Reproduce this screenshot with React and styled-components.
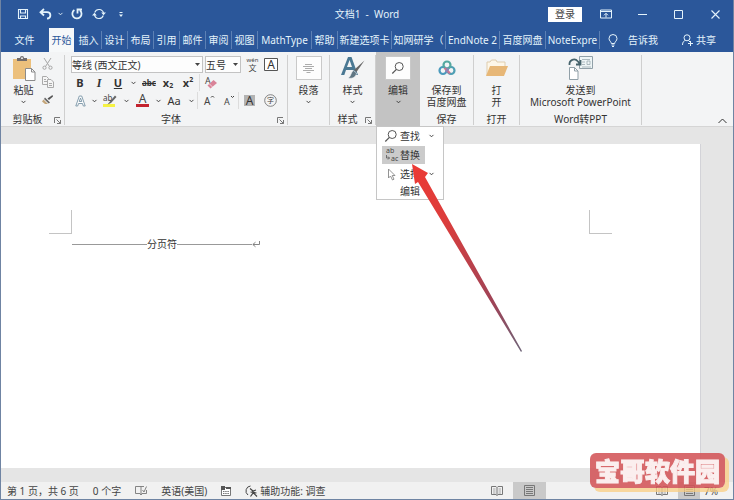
import React from 'react';
import styled, { createGlobalStyle, css } from 'styled-components';

const GlobalStyle = createGlobalStyle`
  * {
    box-sizing: border-box;
  }

  body {
    margin: 0;
    background: #e5e5e5;
    color: #333;
    font-family: 'Noto Sans', 'Noto Sans CJK SC', sans-serif;
    font-size: 10px;
    line-height: 12px;
  }

  button, select {
    margin: 0;
    padding: 0;
    border: none;
    background: transparent;
    color: inherit;
    font: inherit;
  }

  svg {
    display: block;
    flex: none;
    overflow: visible;
  }
`;

/* ---------- window ---------- */

const Window = styled.div`
  display: flex;
  flex-direction: column;
  min-height: 100vh;
  border: 1px solid #6f84a3;
  border-top: none;
  overflow: hidden;
`;

const Header = styled.header`
  margin: 0 -1px;
  background: #2b579a;
  color: #e4f3fb;
`;

const TitleBar = styled.div`
  display: grid;
  grid-template-columns: 1fr auto 1fr;
  align-items: center;
  height: 28px;
`;

const QuickAccess = styled.div`
  display: flex;
  align-items: center;
  padding-left: 14px;
`;

const ToolButton = styled.button`
  display: flex;
  flex: none;
  align-items: center;
  justify-content: center;
  width: ${({ w }) => w || 20}px;
  height: 16px;
`;

const Title = styled.h1`
  margin: 0;
  font-size: 10px;
  font-weight: 400;
  white-space: pre;
`;

const WindowButtons = styled.div`
  display: flex;
  align-items: center;
  justify-content: flex-end;
`;

const LoginButton = styled.button`
  width: 34px;
  height: 15px;
  margin-right: 6px;
  background: #fff;
  color: #444;
`;

const Tabs = styled.nav`
  display: flex;
  height: 24px;
  white-space: nowrap;
`;

const Tab = styled.button`
  flex: none;
  width: ${({ w }) => w || 26}px;
  overflow: hidden;
  border-right: 1px solid #5c80b4;
  border-image: linear-gradient(#2b579a 4px, #5c80b4 4px 20px, #2b579a 20px) 1;
  ${({ plain }) => plain && 'border: none;'}
  ${({ active }) =>
    active &&
    css`
      width: 25px;
      margin-right: 2px;
      border: none;
      background: #f6f8f9;
      color: #2b579a;
    `}
`;

const TellMe = styled.button`
  display: flex;
  align-items: center;
  gap: 10px;
  margin-left: 8px;
`;

const Share = styled.button`
  display: flex;
  align-items: center;
  gap: 3px;
  margin-left: auto;
  padding-right: 18px;
`;

/* ---------- ribbon ---------- */

const Ribbon = styled.section`
  display: flex;
  height: 75px;
  background: #f3f4f5;
  border-bottom: 1px solid #d5d5d5;
`;

const Group = styled.div`
  position: relative;
  display: flex;
  flex: none;
  flex-direction: column;
  width: ${({ w }) => w}px;
  padding-top: 4px;
  border-right: 1px solid #d0d0d0;
  border-image: linear-gradient(#f3f4f5 4px, #cfcfcf 4px 72px, #f3f4f5 72px) 1;
  ${({ open }) =>
    open &&
    css`
      border: none;
      background: #c3c3c3;
    `}
`;

const GroupBody = styled.div`
  display: flex;
  justify-content: center;
  height: 57px;
`;

const GroupLabel = styled.div`
  display: grid;
  grid-template-columns: 1fr auto;
  align-items: center;
  text-align: center;
  white-space: nowrap;

  svg {
    margin: 2px 3px 0 0;
  }
`;

const BigButton = styled.button`
  display: flex;
  flex-direction: column;
  align-items: center;
  justify-content: flex-start;
  white-space: nowrap;
`;

const IconBox = styled.span`
  display: flex;
  align-items: center;
  justify-content: center;
  width: 26px;
  height: 24px;
  margin-bottom: 4px;
  ${({ framed }) =>
    framed &&
    css`
      border: 1px solid #c9c9c9;
      background: #fdfdfd;
    `}
`;

const ChevronLine = styled.span`
  display: flex;
  align-items: center;
  height: 12px;
`;

const SideTools = styled.div`
  display: flex;
  flex-direction: column;
  gap: 2px;
  margin-left: 4px;
`;

const FontTools = styled.div`
  display: flex;
  flex-direction: column;
  gap: 1px;
  width: 100%;
  padding-left: 6px;
`;

const ToolRow = styled.div`
  display: flex;
  align-items: center;
  height: 17px;
`;

const Combo = styled.label`
  display: grid;
  width: ${({ w }) => w}px;
  height: 17px;
  margin-right: 2px;
  border: 1px solid #c3c3c3;
  background: #fdfdfd;

  select,
  svg {
    grid-area: 1 / 1;
  }

  select {
    width: 100%;
    height: 15px;
    appearance: none;
    outline: none;
  }

  svg {
    align-self: center;
    justify-self: end;
    margin-right: 2px;
    pointer-events: none;
  }
`;

const Letter = styled(ToolButton)`
  font-size: 11px;
  font-weight: ${({ bold }) => (bold ? 700 : 400)};
  text-decoration: ${({ line }) => line || 'none'};

  sub,
  sup {
    font-size: 7px;
    line-height: 8px;
  }

  sub {
    padding-top: 6px;
  }

  sup {
    padding-bottom: 6px;
  }
`;

const ItalicLetter = styled(Letter)`
  font-family: 'Liberation Serif', serif;
  font-size: 12px;
  font-style: italic;
`;

const StrikeLetter = styled(Letter)`
  font-size: 8px;
  text-decoration: line-through;
`;

const Separator = styled.span`
  width: 1px;
  height: 17px;
  background: #dcdcdc;
`;

const CollapseButton = styled.button`
  align-self: flex-end;
  margin-left: auto;
  padding: 0 6px 2px 0;
`;

/* ---------- menu below the edit group ---------- */

const Menu = styled.div`
  position: absolute;
  z-index: 2;
  top: 74px;
  left: 0;
  width: 68px;
  height: 74px;
  border: 1px solid #c6c6c6;
  background: #fff;
`;

const MenuItem = styled.button`
  display: grid;
  grid-template-columns: 18px 20px 1fr;
  align-items: center;
  width: ${({ selected }) => (selected ? 43 : 60)}px;
  height: 18px;
  margin: 0 0 1px 5px;
  text-align: left;
  background: ${({ selected }) => (selected ? '#cbcbcb' : 'transparent')};

  svg {
    justify-self: center;
  }
`;

const MenuCaption = styled.div`
  padding-left: 23px;
  line-height: 15px;
`;

const Pointer = styled.svg`
  position: absolute;
  top: 36px;
  left: 34px;
  pointer-events: none;
`;

/* ---------- document ---------- */

const Page = styled.main`
  flex: 1;
  margin: 17px 32px 14px 0;
  padding-top: 66px;
  border-right: 1px solid #d3d3d8;
  background: #fff;
`;

const MarginMarks = styled.div`
  display: flex;
  justify-content: space-between;
  padding: 0 88px 0 48px;
`;

const Mark = styled.span`
  width: 23px;
  height: 24px;
  border-bottom: 1px solid #c4c4c4;
  ${({ side }) => `border-${side}: 1px solid #c4c4c4;`}
`;

const PageBreak = styled.p`
  display: flex;
  align-items: center;
  width: 188px;
  margin: 4px 0 0 71px;
`;

const Rule = styled.span`
  flex: 1;
  height: 1px;
  background: #999;
`;

/* ---------- status bar ---------- */

const StatusBar = styled.footer`
  display: flex;
  align-items: center;
  height: 17px;
  padding-left: 6px;
  background: #f1f1f1;
  color: #444;
  white-space: nowrap;
`;

const StatusItem = styled.span`
  display: flex;
  align-items: center;
  gap: 2px;
  margin-right: 14px;
`;

const ViewButtons = styled.div`
  display: flex;
  align-items: center;
  gap: ${({ spaced }) => (spaced ? 99 : 0)}px;
  height: 100%;
  ${({ spaced }) => spaced && 'margin-left: auto;'}
`;

const ViewButton = styled.button`
  display: flex;
  align-items: center;
  justify-content: center;
  width: ${({ w }) => w || 33}px;
  height: 100%;
  background: ${({ on }) => (on ? '#c9c9c9' : 'transparent')};
`;

const Zoom = styled.span`
  width: 33px;
  padding-left: 4px;
`;

const Stamp = styled.div`
  position: fixed;
  z-index: 3;
  right: 9px;
  bottom: 12px;
  padding: 0 5px;
  border-radius: 6px;
  background: rgba(211, 84, 88, 0.88);
  box-shadow: 4px 4px 0 rgba(250, 205, 130, 0.75);
  color: #fbeeee;
  font-family: 'Noto Sans CJK SC', sans-serif;
  font-size: 25px;
  font-weight: 900;
  line-height: 35px;
  -webkit-text-stroke: 1px #fbeeee;
`;

/* ---------- icons ---------- */

const Chevron = ({ up }) => (
  <svg width={up ? 9 : 5} height={up ? 6 : 4} viewBox='0 0 9 6' fill='none' stroke='currentColor' strokeWidth={up ? 1 : 1.6}>
    <path d={up ? 'M.5 5 4.5 1l4 4' : 'M1 1l3.5 3.5L8 1'} />
  </svg>
);

const DropArrow = () => (
  <svg width='5' height='3' viewBox='0 0 5 3'>
    <path d='M0 0h5L2.5 3z' fill='#444' />
  </svg>
);

const Launcher = () => (
  <svg width='7' height='7' viewBox='0 0 7 7' fill='none' stroke='#777'>
    <path d='M.5 6V.5H6M2.5 2.5l4 4M6.5 3v3.5H3' />
  </svg>
);

const SaveIcon = () => (
  <svg width='12' height='12' viewBox='0 0 12 12' fill='none' stroke='currentColor'>
    <path d='M1.5 1.5h9v9h-9zM3.5 1.5v3.500h5v-3.500M3.5 10.500v-2.500h5v2.500' strokeWidth='1.1' />
  </svg>
);

const UndoIcon = () => (
  <svg width='13' height='12' viewBox='0 0 13 12' fill='none' stroke='currentColor' strokeWidth='1.8'>
    <path d='M5 1 1.5 4.2 5 7.5M2 4.2h6c4.5 0 4.500 6 0 6.500' />
  </svg>
);

const RedoIcon = () => (
  <svg width='12' height='12' viewBox='0 0 12 12' fill='none' stroke='currentColor' strokeWidth='1.8'>
    <path d='M3.4 2A4.6 4.6 0 1 0 9 2.4M6.5 5.500V1.5H11' />
  </svg>
);

const SyncIcon = () => (
  <svg width='14' height='12' viewBox='0 0 14 12' fill='none' stroke='currentColor' strokeWidth='1.1'>
    <path d='M2.700 4.5a4.600 4.600 0 0 1 8.800.6M11.300 7.5a4.600 4.600 0 0 1-8.800-.6' />
    <path d='M9.2 4.5h4.800L11.5 7.300zM0 7.5h4.800L2.5 4.700z' fill='currentColor' stroke='none' />
  </svg>
);

const MoreIcon = () => (
  <svg width='4' height='5' viewBox='0 0 4 5' fill='currentColor'>
    <path d='M.5 0h3v1h-3zM0 2.500h4L2 5z' />
  </svg>
);

const RibbonIcon = () => (
  <svg width='12' height='10' viewBox='0 0 12 10' fill='none' stroke='currentColor'>
    <path d='M.5 1h11v8H.5zM.5 2.5h11M6 8.5V4.5M4 6.3l2-2 2 2' />
  </svg>
);

const MinIcon = () => (
  <svg width='9' height='9' stroke='currentColor'>
    <path d='M0 4.5h9' />
  </svg>
);

const MaxIcon = () => (
  <svg width='9' height='9' fill='none' stroke='currentColor'>
    <path d='M.5.5h8v8h-8z' />
  </svg>
);

const CloseIcon = () => (
  <svg width='9' height='9' stroke='currentColor' strokeWidth='1.1'>
    <path d='M.5.5l8 8M8.5.5l-8 8' />
  </svg>
);

const BulbIcon = () => (
  <svg width='10' height='13' viewBox='0 0 10 13' fill='none' stroke='currentColor'>
    <path d='M3.3 9.5C3.3 7.5 1 7 1 4.5a4 4 0 0 1 8 0C9 7 6.7 7.5 6.7 9.5zM3.5 11h3M4 12.5h2' />
  </svg>
);

const PersonIcon = () => (
  <svg width='11' height='12' viewBox='0 0 11 12' fill='none' stroke='currentColor'>
    <circle cx='5' cy='3.8' r='3' />
    <path d='M.5 11c0-3 1.500-4.300 3-4.500M6.5 6.5 8 8M6 9.5h5M8.5 7v5' />
  </svg>
);

const PasteIcon = () => (
  <svg width='24' height='25' viewBox='0 0 24 25'>
    <path d='M1 3h18v20H1z' fill='#ecc07c' />
    <path d='M5 5V2h3a2 2 0 0 1 4 0h3v3z' fill='#716c6c' />
    <circle cx='10' cy='2.2' r='.9' fill='#fff' />
    <path d='M13.5 12.5h6l3.500 3.500v8.500h-9.500z' fill='#fff' stroke='#8b8b8b' />
    <path d='M19.5 12.5V16H23' fill='none' stroke='#8b8b8b' />
  </svg>
);

const CutIcon = () => (
  <svg width='11' height='12' viewBox='0 0 11 12' fill='none' stroke='#a6a6a6'>
    <path d='M2 0l5.500 8.500M9 0 3.5 8.5' />
    <circle cx='2.5' cy='9.7' r='1.6' />
    <circle cx='8.5' cy='9.7' r='1.6' />
  </svg>
);

const CopyIcon = () => (
  <svg width='12' height='12' viewBox='0 0 12 12' fill='#f5f5f5' stroke='#aaa'>
    <path d='M.5.5h4l2 2v6h-6zM2 3.5h2M2 5.5h3' />
    <path d='M5.5 3.5h3.500l2.500 2.500v5.500h-6zM7 7.5h3M7 9.5h3' />
  </svg>
);

const BrushIcon = () => (
  <svg width='11' height='10' viewBox='0 0 11 10'>
    <path d='M10.5 0 11 1.5 7 5 5.5 3.5z' fill='#555' />
    <path d='M3 2.5l5 5-1.300 1L2 4z' fill='#666' />
    <path d='M1.5 4.5 6 9H3L0 6.5z' fill='#c5a67a' />
  </svg>
);

const PhoneticIcon = () => (
  <svg width='13' height='14' viewBox='0 0 13 14' fill='#444'>
    <text x='6.5' y='4' textAnchor='middle' fontSize='6'>wén</text>
    <text x='6.5' y='13' textAnchor='middle' fontSize='8' fontFamily='Noto Sans CJK SC'>文</text>
  </svg>
);

const BoxedA = () => (
  <svg width='14' height='14' viewBox='0 0 14 14'>
    <path d='M.5.5h13v12H.5z' fill='#fff' stroke='#555' />
    <text x='7' y='11' textAnchor='middle' fontSize='12' fill='#333'>A</text>
  </svg>
);

const ShadedA = () => (
  <svg width='12' height='13' viewBox='0 0 12 13'>
    <path d='M0 1h11v11H0z' fill='#b3b3b3' />
    <text x='5.5' y='11' textAnchor='middle' fontSize='12' fill='#333'>A</text>
  </svg>
);

const CircledChar = () => (
  <svg width='13' height='13' viewBox='0 0 13 13'>
    <circle cx='6.5' cy='6.5' r='5.8' fill='none' stroke='#666' strokeWidth='.8' />
    <text x='6.5' y='9' textAnchor='middle' fontSize='7' fill='#444'>字</text>
  </svg>
);

const EraserIcon = () => (
  <svg width='13' height='14' viewBox='0 0 13 14'>
    <text x='0' y='8' fontSize='9' fill='#444'>A</text>
    <path d='M8.5 4 12 7l-6.500 5.500L2.5 9.5z' fill='#d98398' />
    <path d='M4.5 8l3 3' stroke='#f4d5dc' />
  </svg>
);

const OutlineA = () => (
  <svg width='11' height='12' viewBox='0 0 11 12' fill='#fff' stroke='#7894a6'>
    <path d='M.8 11 4.3 1h2.400l3.500 10H8.3L7.5 8.5h-4L2.7 11zM4.2 6.5h2.600L5.5 3z' strokeWidth='.9' />
  </svg>
);

const HighlightIcon = () => (
  <svg width='14' height='13' viewBox='0 0 14 13'>
    <path d='M0 10h12v3H0z' fill='#f5f243' />
    <text x='0' y='7' fontSize='8' fill='#444'>ab</text>
    <path d='M12 1.5 6.5 8l-2 2.500L8 9l5.500-6z' fill='#666' />
  </svg>
);

const FontColorIcon = () => (
  <svg width='13' height='13' viewBox='0 0 13 13'>
    <text x='6.5' y='9' textAnchor='middle' fontSize='12' fill='#444'>A</text>
    <path d='M0 10h13v3H0z' fill='#c3232f' />
  </svg>
);

const SizeIcon = ({ down }) => (
  <svg width='11' height='12' viewBox='0 0 11 12' fill='none'>
    <text x='0' y='10' fontSize={down ? 9 : 10} fill='#444'>A</text>
    <path d={down ? 'M7 1l1.500 1.500L10 1' : 'M7 2.500l1.500-1.500L10 2.500'} stroke='#444' />
  </svg>
);

const ParagraphIcon = () => (
  <svg width='11' height='9' viewBox='0 0 11 9' stroke='#888'>
    <path d='M2 .5h7M0 2.500h11M2 4.5h7M0 6.500h11M3.500 8.500h4' strokeWidth='.7' />
  </svg>
);

const StylesIcon = () => (
  <svg width='24' height='24' viewBox='0 0 24 24'>
    <path d='M0 19 7 1h3.500L17 19h-3.500l-1.700-5H5l-1.700 5zM6 11h5L8.6 4z' fill='#4a7893' />
    <path d='M23.5 4.5 15.5 16l-2.500-2z' fill='#666' />
    <path d='M12.5 14.5l3 2.500c-.5 4.500-4.500 6-8.500 5 3-.8 2.500-5.500 5.500-7.500z' fill='#5f7683' stroke='#f3f4f5' strokeWidth='.6' />
  </svg>
);

const SearchIcon = () => (
  <svg width='12' height='12' viewBox='0 0 12 12' fill='none' stroke='#555'>
    <circle cx='7.2' cy='4.5' r='4' />
    <path d='M4.4 7.4.3 11.5' strokeWidth='1.2' />
  </svg>
);

const CloudIcon = () => (
  <svg width='18' height='16' viewBox='0 0 18 16' fill='none' strokeWidth='2.2'>
    <circle cx='5' cy='10.5' r='3.5' stroke='#4b9bbd' />
    <circle cx='13' cy='10.5' r='3.5' stroke='#4f9fb4' />
    <circle cx='9' cy='5' r='3.5' stroke='#55a8a0' />
    <path d='M6.5 8 12 13.4' stroke='#cd7492' />
    <path d='M10.5 8.2 7.8 12' stroke='#8a86b4' />
  </svg>
);

const FolderIcon = () => (
  <svg width='24' height='18' viewBox='0 0 24 18'>
    <path d='M2 16V3h3l1.500-2H11l1 2h8v4' fill='#fdf6e8' stroke='#dfcdae' />
    <path d='M5 7h18l-4 10H1z' fill='#e7b777' />
  </svg>
);

const SendIcon = () => (
  <svg width='25' height='24' viewBox='0 0 25 24' fill='none' stroke='#91a0a8'>
    <path d='M11.5.5h13v12h-13z' fill='#eef5f6' />
    <path d='M14 3.5h8M14 6h3M14 8.5h3M14 11h9' strokeWidth='.7' />
    <path d='M19 5h3v3.500h-3z' strokeWidth='.7' />
    <path d='M1.5 9c-.5-5 5-7.500 8.500-3.500l1.500 2M12.5 4v4.500H8' stroke='#46636c' strokeWidth='1.8' />
    <path d='M1.5 11.5h5l3.500 3.500v8.500H1.5z' fill='#fff' />
    <path d='M6.5 11.5V15H10' />
  </svg>
);

const ReplaceIcon = () => (
  <svg width='13' height='14' viewBox='0 0 13 14' fill='#444'>
    <text x='1' y='5' fontSize='7'>ab</text>
    <text x='6' y='13' fontSize='7'>ac</text>
    <path d='M1.5 7v3h3M3 8.5l1.500 1.500L3 11.5' fill='none' stroke='#555' strokeWidth='.8' />
  </svg>
);

const CursorIcon = () => (
  <svg width='10' height='13' viewBox='0 0 10 13'>
    <path d='M2.5 1v9l2-2 2 4 1.500-.8L6.2 7.5H9z' fill='#fff' stroke='#888' strokeWidth='.9' />
  </svg>
);

const ReturnMark = () => (
  <svg width='8' height='7' viewBox='0 0 8 7' fill='none' stroke='#777' strokeWidth='.9'>
    <path d='M7.5 0v3.500H1M3.5 1.2.8 3.5l2.700 2.300' />
  </svg>
);

const ProofIcon = () => (
  <svg width='12' height='11' viewBox='0 0 12 11' fill='none' stroke='#777' strokeWidth='.9'>
    <path d='M6 1.5H.5v7H5L6 10l1-1.500h4.500V5M6 1.5V10M6 1.5h3M7.5 5l1.500 2 2.500-5.500' />
  </svg>
);

const MacroIcon = () => (
  <svg width='10' height='10' viewBox='0 0 10 10'>
    <path d='M.5 1.5h9v8h-9z' fill='#fff' stroke='#777' />
    <path d='M0 0h4v4H0zM5 1h5v2H5z' fill='#555' />
    <path d='M2 5.5h6M2 7.5h6' stroke='#777' strokeDasharray='1.5 .7' />
  </svg>
);

const AccessIcon = () => (
  <svg width='13' height='12' viewBox='0 0 13 12' fill='none' stroke='#444'>
    <path d='M5.5 1A5 5 0 0 0 3 10' />
    <path d='M5 3.500l3 2.500 3-1M8 6v2L5.5 11.5M8 7.500l4 4M5.500 7l6 1' strokeWidth='1.2' />
  </svg>
);

const ReadIcon = () => (
  <svg width='12' height='10' viewBox='0 0 12 10' fill='none' stroke='#777'>
    <path d='M.5.5H5l1 1 1-1h4.500v8H7l-1 1-1-1H.5zM6 1.5v8' />
    <path d='M2 3h2.500M2 5h2.500M2 7h2.500M7.5 3H10M7.5 5H10M7.5 7H10' strokeWidth='.6' />
  </svg>
);

const PrintIcon = () => (
  <svg width='11' height='11' viewBox='0 0 11 11' fill='none' stroke='#777'>
    <path d='M.5.5h10v10H.5zM2 2.5h7M2 4.5h7M2 6.5h7M2 8.5h7' />
  </svg>
);

/* ---------- data ---------- */

const tabs = [
  { name: '插入' },
  { name: '设计' },
  { name: '布局' },
  { name: '引用' },
  { name: '邮件' },
  { name: '审阅' },
  { name: '视图' },
  { name: 'MathType', w: 54 },
  { name: '帮助' },
  { name: '新建选项卡', w: 54 },
  { name: '知网研学（', w: 54 },
  { name: 'EndNote 2', w: 54 },
  { name: '百度网盘', w: 46 },
  { name: 'NoteExpre', w: 54 },
];

const FontGroup = () => (
  <Group w={223}>
    <GroupBody>
      <FontTools>
        <ToolRow>
          <Combo w={132}>
            <select aria-label='字体'>
              <option>等线 (西文正文)</option>
            </select>
            <DropArrow />
          </Combo>
          <Combo w={36}>
            <select aria-label='字号'>
              <option>五号</option>
            </select>
            <DropArrow />
          </Combo>
          <ToolButton w={18} aria-label='拼音指南'><PhoneticIcon /></ToolButton>
          <ToolButton aria-label='字符边框'><BoxedA /></ToolButton>
        </ToolRow>
        <ToolRow>
          <Letter bold w={18}>B</Letter>
          <ItalicLetter bold>I</ItalicLetter>
          <Letter bold line='underline' w={18}>U</Letter>
          <ToolButton w={12} aria-label='下划线'><Chevron /></ToolButton>
          <StrikeLetter bold>abc</StrikeLetter>
          <Letter bold w={18}>x<sub>2</sub></Letter>
          <Letter bold w={22}>x<sup>2</sup></Letter>
          <Separator />
          <ToolButton w={22} aria-label='清除格式'><EraserIcon /></ToolButton>
        </ToolRow>
        <ToolRow>
          <ToolButton w={18} aria-label='文本效果'><OutlineA /></ToolButton>
          <ToolButton w={10} aria-label='更多效果'><Chevron /></ToolButton>
          <ToolButton w={22} aria-label='突出显示'><HighlightIcon /></ToolButton>
          <ToolButton w={10} aria-label='更多突出显示'><Chevron /></ToolButton>
          <ToolButton w={22} aria-label='字体颜色'><FontColorIcon /></ToolButton>
          <ToolButton w={10} aria-label='更多颜色'><Chevron /></ToolButton>
          <Letter w={22}>Aa</Letter>
          <ToolButton w={12} aria-label='更改大小写'><Chevron /></ToolButton>
          <Separator />
          <ToolButton w={22} aria-label='增大字号'><SizeIcon /></ToolButton>
          <ToolButton w={18} aria-label='减小字号'><SizeIcon down /></ToolButton>
          <Separator />
          <ToolButton w={22} aria-label='字符底纹'><ShadedA /></ToolButton>
          <ToolButton w={18} aria-label='带圈字符'><CircledChar /></ToolButton>
        </ToolRow>
      </FontTools>
    </GroupBody>
    <GroupLabel>
      <span>字体</span>
      <Launcher />
    </GroupLabel>
  </Group>
);

const EditMenu = () => (
  <Menu>
    <MenuItem>
      <SearchIcon />
      查找
      <Chevron />
    </MenuItem>
    <MenuItem selected>
      <ReplaceIcon />
      替换
    </MenuItem>
    <MenuItem>
      <CursorIcon />
      选择
      <Chevron />
    </MenuItem>
    <MenuCaption>编辑</MenuCaption>
    <Pointer width='111' height='190' viewBox='0 0 111 190'>
      <defs>
        <linearGradient id='shaft' x1='0' y1='0' x2='1' y2='1'>
          <stop offset='0' stopColor='#ec3a34' />
          <stop offset='0.3' stopColor='#dc3d3c' />
          <stop offset='0.75' stopColor='#9c4458' />
          <stop offset='1' stopColor='#6d6478' />
        </linearGradient>
      </defs>
      <path d='M1 1 17 10 14 14 111 188 110 189 7 19 4 21z' fill='url(#shaft)' />
    </Pointer>
  </Menu>
);

const App = () => {
  return (
    <>
      <GlobalStyle />
      <Window>
        <Header>
          <TitleBar>
            <QuickAccess>
              <ToolButton w={18} aria-label='保存'><SaveIcon /></ToolButton>
              <ToolButton w={26} aria-label='撤消'><UndoIcon /></ToolButton>
              <ToolButton w={4} aria-label='撤消列表'><Chevron /></ToolButton>
              <ToolButton w={30} aria-label='重复'><RedoIcon /></ToolButton>
              <ToolButton w={14} aria-label='同步'><SyncIcon /></ToolButton>
              <ToolButton w={30} aria-label='自定义'><MoreIcon /></ToolButton>
            </QuickAccess>
            <Title>文档1  -  Word</Title>
            <WindowButtons>
              <LoginButton>登录</LoginButton>
              <ToolButton w={36} aria-label='功能区选项'><RibbonIcon /></ToolButton>
              <ToolButton w={36} aria-label='最小化'><MinIcon /></ToolButton>
              <ToolButton w={36} aria-label='最大化'><MaxIcon /></ToolButton>
              <ToolButton w={38} aria-label='关闭'><CloseIcon /></ToolButton>
            </WindowButtons>
          </TitleBar>
          <Tabs>
            <Tab w={49} plain>文件</Tab>
            <Tab active>开始</Tab>
            {tabs.map(({ name, w }) => (
              <Tab key={name} w={w}>{name}</Tab>
            ))}
            <TellMe>
              <BulbIcon />
              告诉我
            </TellMe>
            <Share>
              <PersonIcon />
              共享
            </Share>
          </Tabs>
        </Header>

        <Ribbon>
          <Group w={64}>
            <GroupBody>
              <BigButton>
                <IconBox><PasteIcon /></IconBox>
                粘贴
                <ChevronLine><Chevron /></ChevronLine>
              </BigButton>
              <SideTools>
                <ToolButton w={14} aria-label='剪切'><CutIcon /></ToolButton>
                <ToolButton w={14} aria-label='复制'><CopyIcon /></ToolButton>
                <ToolButton w={14} aria-label='格式刷'><BrushIcon /></ToolButton>
              </SideTools>
            </GroupBody>
            <GroupLabel>
              <span>剪贴板</span>
              <Launcher />
            </GroupLabel>
          </Group>

          <FontGroup />

          <Group w={42}>
            <BigButton>
              <IconBox framed><ParagraphIcon /></IconBox>
              段落
              <ChevronLine><Chevron /></ChevronLine>
            </BigButton>
          </Group>

          <Group w={46}>
            <GroupBody>
              <BigButton>
                <IconBox><StylesIcon /></IconBox>
                样式
                <ChevronLine><Chevron /></ChevronLine>
              </BigButton>
            </GroupBody>
            <GroupLabel>
              <span>样式</span>
              <Launcher />
            </GroupLabel>
          </Group>

          <Group w={44} open>
            <BigButton aria-expanded='true'>
              <IconBox framed><SearchIcon /></IconBox>
              编辑
              <ChevronLine><Chevron /></ChevronLine>
            </BigButton>
            <EditMenu />
          </Group>

          <Group w={54}>
            <GroupBody>
              <BigButton>
                <IconBox><CloudIcon /></IconBox>
                <span>保存到</span>
                <span>百度网盘</span>
              </BigButton>
            </GroupBody>
            <GroupLabel><span>保存</span></GroupLabel>
          </Group>

          <Group w={46}>
            <GroupBody>
              <BigButton>
                <IconBox><FolderIcon /></IconBox>
                <span>打</span>
                <span>开</span>
              </BigButton>
            </GroupBody>
            <GroupLabel><span>打开</span></GroupLabel>
          </Group>

          <Group w={122}>
            <GroupBody>
              <BigButton>
                <IconBox><SendIcon /></IconBox>
                <span>发送到</span>
                <span>Microsoft PowerPoint</span>
              </BigButton>
            </GroupBody>
            <GroupLabel><span>Word转PPT</span></GroupLabel>
          </Group>

          <CollapseButton aria-label='折叠功能区'><Chevron up /></CollapseButton>
        </Ribbon>

        <Page>
          <MarginMarks>
            <Mark side='right' />
            <Mark side='left' />
          </MarginMarks>
          <PageBreak>
            <Rule />
            分页符
            <Rule />
            <ReturnMark />
          </PageBreak>
        </Page>

        <StatusBar>
          <StatusItem>第 1 页，共 6 页</StatusItem>
          <StatusItem>0 个字</StatusItem>
          <StatusItem><ProofIcon /></StatusItem>
          <StatusItem>英语(美国)</StatusItem>
          <StatusItem><MacroIcon /></StatusItem>
          <StatusItem><AccessIcon />辅助功能: 调查</StatusItem>
          <ViewButtons spaced>
            <ViewButtons>
              <ViewButton aria-label='阅读视图'><ReadIcon /></ViewButton>
              <ViewButton on aria-label='页面视图'><PrintIcon /></ViewButton>
            </ViewButtons>
            <ViewButtons>
              <ViewButton aria-label='双页'><ReadIcon /></ViewButton>
              <ViewButton on w={22} aria-label='单页'><PrintIcon /></ViewButton>
              <Zoom>7%</Zoom>
            </ViewButtons>
          </ViewButtons>
        </StatusBar>
      </Window>
      <Stamp>宝哥软件园</Stamp>
    </>
  );
};

export default App;
